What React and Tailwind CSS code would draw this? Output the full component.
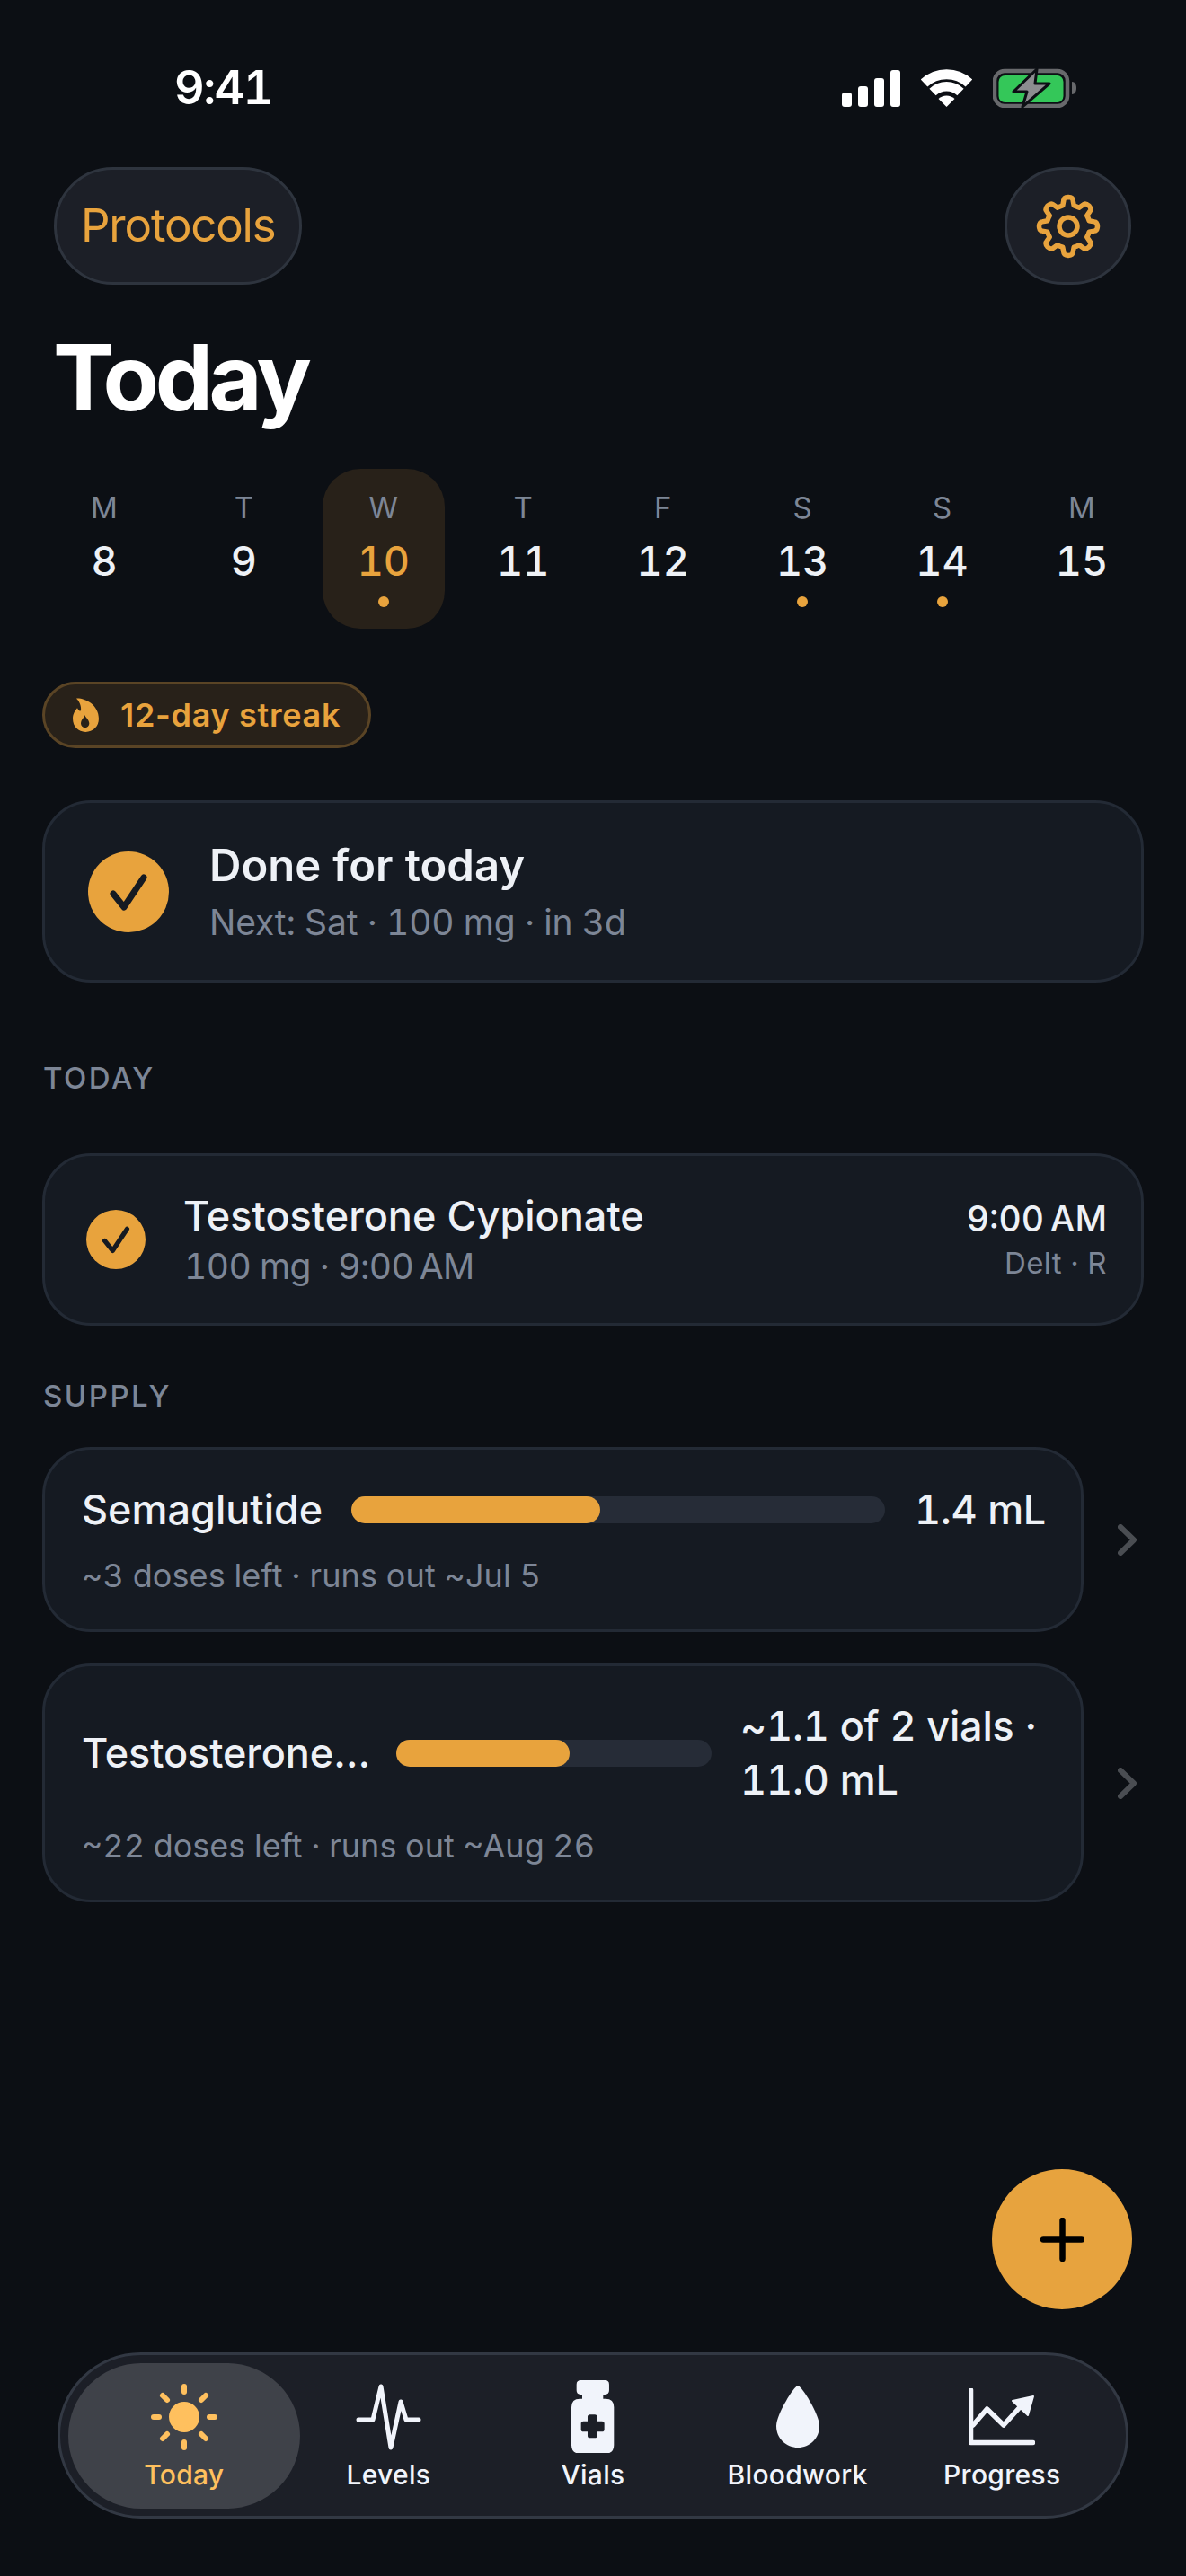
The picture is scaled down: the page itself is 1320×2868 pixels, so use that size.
import React from "react";

function Signal() {
  return (
    <div className="flex items-end gap-[7px] h-[41px]">
      <div className="w-[11px] h-[16px] rounded-[3px] bg-white" />
      <div className="w-[11px] h-[23px] rounded-[3px] bg-white" />
      <div className="w-[11px] h-[32px] rounded-[3px] bg-white" />
      <div className="w-[11px] h-[41px] rounded-[3px] bg-white" />
    </div>
  );
}

function Wifi() {
  return (
    <svg width="57" height="42" viewBox="0 0 57 42" fill="none">
      <path d="M3.6 15.5 A36.5 36.5 0 0 1 53.4 15.5" stroke="#fff" strokeWidth="11" />
      <path d="M13 25.5 A22.5 22.5 0 0 1 44 25.5" stroke="#fff" strokeWidth="10.5" />
      <path d="M28.5 42 L19.5 33 A13 13 0 0 1 37.5 33 Z" fill="#fff" />
    </svg>
  );
}

function Battery() {
  return (
    <svg width="93" height="44" viewBox="0 0 93 44" fill="none">
      <rect x="2" y="3" width="81" height="39" rx="11" stroke="#68696c" strokeWidth="4.5" />
      <rect x="6.5" y="8" width="72" height="30" rx="7" fill="#34c759" />
      <path d="M88 15 C91.5 15 93 18 93 22 C93 26 91.5 29 88 29 Z" fill="#68696c" />
      <path d="M49 1 L23 26 L38 26 L33 43 L63 17 L47 17 Z" fill="#8c8d90" stroke="#0c0f14" strokeWidth="3" strokeLinejoin="round" />
    </svg>
  );
}

function gearPath() {
  const rIn = 24;
  const rOut = 31.5;
  const pt = (r, deg) => {
    const a = (deg * Math.PI) / 180;
    return `${(r * Math.sin(a)).toFixed(2)} ${(-r * Math.cos(a)).toFixed(2)}`;
  };
  let d = "";
  for (let i = 0; i < 8; i++) {
    const c = i * 45;
    d += `${i === 0 ? "M" : `A${rIn} ${rIn} 0 0 1 `}${pt(rIn, c - 15)} `;
    d += `L${pt(rOut - 2, c - 10)} Q${pt(rOut + 1, c - 9)} ${pt(rOut + 1, c)} Q${pt(rOut + 1, c + 9)} ${pt(rOut - 2, c + 10)} `;
    d += `L${pt(rIn, c + 15)} `;
  }
  d += `A${rIn} ${rIn} 0 0 1 ${pt(rIn, -15)} Z`;
  return d;
}

function Gear() {
  return (
    <svg width="72" height="72" viewBox="-36 -36 72 72" fill="none">
      <path d={gearPath()} stroke="#e8a33d" strokeWidth="5.5" strokeLinejoin="round" />
      <circle r="10" stroke="#e8a33d" strokeWidth="5.5" />
    </svg>
  );
}

function Check({ size }) {
  return (
    <div className="flex items-center justify-center rounded-full bg-[#e8a33d] shrink-0" style={{ width: size, height: size }}>
      <svg width={size} height={size} viewBox="0 0 90 90" fill="none">
        <path d="M28 47 L40 62 L62 29" stroke="#151a22" strokeWidth="7" strokeLinecap="round" strokeLinejoin="round" />
      </svg>
    </div>
  );
}

function Flame() {
  return (
    <svg width="30" height="38.6" viewBox="33 38 90 116">
      <path
        fillRule="evenodd"
        fill="#e8a33d"
        d="M45 40 C72 38 120 60 120 108 C120 134 100 152 76 152 C52 152 33 134 33 108 C33 92 40 82 48 72 C52 80 56 84 60 80 C62 66 56 50 45 40 Z M72 95 C72 104 60 110 60 124 C60 132 66 138 74 138 C82 138 88 132 88 124 C88 112 78 106 72 95 Z"
      />
    </svg>
  );
}

function Day({ letter, num, active, dot }) {
  return (
    <div className={active ? "flex flex-col items-center w-[136px] h-[178px] pt-[23px] rounded-[42px] bg-[#282119]" : "flex flex-col items-center w-[136px] h-[178px] pt-[23px]"}>
      <div className="text-[33px] leading-[40px] text-[#7d8696]">{letter}</div>
      <div className={active ? "mt-[12px] text-[45px] leading-[56px] font-medium text-[#e8a33d]" : "mt-[12px] text-[45px] leading-[56px] font-medium text-[#eef1f6]"}>{num}</div>
      {dot && <div className="mt-[11px] w-[12px] h-[12px] rounded-full bg-[#e8a33d]" />}
    </div>
  );
}

function Chevron() {
  return (
    <svg width="21" height="35" viewBox="0 0 21 35" fill="none" className="shrink-0">
      <path d="M3 3 L18 17.5 L3 32" stroke="#4a4d52" strokeWidth="6" strokeLinecap="round" strokeLinejoin="round" />
    </svg>
  );
}

function Sun() {
  const rays = [
    [0, -28, 0, -34],
    [0, 28, 0, 34],
    [-28, 0, -34, 0],
    [28, 0, 34, 0],
    [-19, -19, -24, -24],
    [19, -19, 24, -24],
    [-19, 19, -24, 24],
    [19, 19, 24, 24],
  ];
  return (
    <svg width="74" height="74" viewBox="-37 -37 74 74" fill="none">
      <circle r="17" fill="#ffc05e" />
      {rays.map((r, i) => (
        <line key={i} x1={r[0]} y1={r[1]} x2={r[2]} y2={r[3]} stroke="#ffc05e" strokeWidth="6" strokeLinecap="round" />
      ))}
    </svg>
  );
}

function Pulse() {
  return (
    <svg width="73" height="74" viewBox="-3 -3 73 74" fill="none">
      <path d="M0 37 L16 37 L25 0 L36 68 L47 17 L53 37 L67 37" stroke="#f1f4fb" strokeWidth="5" strokeLinecap="round" strokeLinejoin="round" />
    </svg>
  );
}

function Vial() {
  return (
    <svg width="47.3" height="81.7" viewBox="226 60 142 245">
      <path
        fill="#f1f4fb"
        fillRule="evenodd"
        d="M258 60 H338 Q352 60 352 74 V94 Q352 108 338 108 H332 V122 H340 Q368 122 368 150 V277 Q368 305 340 305 H254 Q226 305 226 277 V150 Q226 122 254 122 H262 V108 H257 Q243 108 243 94 V74 Q243 60 258 60 Z M288 175 Q280 175 280 183 V197 H266 Q258 197 258 205 V224 Q258 232 266 232 H280 V245 Q280 253 288 253 H304 Q312 253 312 245 V232 H328 Q336 232 336 224 V205 Q336 197 328 197 H312 V183 Q312 175 304 175 Z"
      />
    </svg>
  );
}

function Drop() {
  return (
    <svg width="48" height="69" viewBox="0 0 48 69">
      <path fill="#f1f4fb" d="M24 0 C28 0 48 32 48 45 C48 59 37 69 24 69 C11 69 0 59 0 45 C0 32 20 0 24 0 Z" />
    </svg>
  );
}

function Chart() {
  return (
    <svg width="74" height="64" viewBox="0 0 74 64" fill="none">
      <path d="M2.5 2 V60.5 H71.5" stroke="#f1f4fb" strokeWidth="5.5" strokeLinecap="round" strokeLinejoin="round" />
      <path d="M5 41 L20.5 23 L39 41 L58 20" stroke="#f1f4fb" strokeWidth="5.5" strokeLinecap="round" strokeLinejoin="round" />
      <path d="M49 14 L72 9 L66 30 Z" fill="#f1f4fb" stroke="#f1f4fb" strokeWidth="2" strokeLinejoin="round" />
    </svg>
  );
}

function Tab({ label, active, children }) {
  return (
    <div className="relative flex flex-col items-center h-[162px] pt-[19px]">
      {active && <div className="absolute inset-y-0 -inset-x-[15px] rounded-full bg-[#3f4249]" />}
      <div className="relative flex items-center justify-center h-[82px]">{children}</div>
      <div className={active ? "relative mt-[3px] text-[30px] leading-[40px] font-medium tracking-[0.3px] text-[#ffc05e]" : "relative mt-[3px] text-[30px] leading-[40px] font-medium tracking-[0.3px] text-[#f1f4fb]"}>{label}</div>
    </div>
  );
}

const days = [
  ["M", 8], ["T", 9], ["W", 10, true, true], ["T", 11], ["F", 12], ["S", 13, false, true], ["S", 14, false, true], ["M", 15],
];

export default function App() {
  return (
    <div className="relative flex flex-col w-[1320px] h-[2868px] overflow-hidden bg-[#0c0f14] [font-family:Inter,sans-serif] tabular-nums text-[#eef1f6]">
      <div className="mt-[76px] flex items-center justify-between pl-[194px] pr-[122px] h-[44px]">
        <div className="text-[52px] leading-[44px] font-semibold tracking-[-1.5px] text-white">9:41</div>
        <div className="flex items-center">
          <Signal />
          <div className="ml-[23px]"><Wifi /></div>
          <div className="ml-[23px]"><Battery /></div>
        </div>
      </div>

      <div className="mt-[66px] flex items-center justify-between pl-[60px] pr-[61px]">
        <div className="flex items-center h-[131px] px-[27px] rounded-full border-[3px] border-[#2e343e] bg-[#1c1f27] text-[51px] tracking-[-1.2px] text-[#e8a33d]">Protocols</div>
        <div className="flex items-center justify-center w-[141px] h-[131px] rounded-full border-[3px] border-[#2e343e] bg-[#1c1f27]">
          <Gear />
        </div>
      </div>

      <h1 className="mt-[52px] ml-[59px] text-[102px] leading-[102px] font-bold tracking-[-4.5px] text-white">Today</h1>

      <div className="mt-[51px] px-[48px] flex justify-between">
        {days.map((d, i) => (
          <Day key={i} letter={d[0]} num={d[1]} active={d[2]} dot={d[3]} />
        ))}
      </div>

      <div className="mt-[59px] ml-[47px] self-start flex items-center h-[74px] pl-[31px] pr-[31px] rounded-full border-[3px] border-[#5a4425] bg-[#282119]">
        <Flame />
        <span className="ml-[23px] text-[36px] font-semibold tracking-[0.7px] normal-nums text-[#e8a33d]">12-day streak</span>
      </div>

      <div className="mt-[58px] mx-[47px] flex items-center h-[203px] pl-[48px] rounded-[54px] border-[3px] border-[#232a35] bg-[#151a22]">
        <Check size={90} />
        <div className="ml-[45px] pt-[2px]">
          <div className="text-[49px] leading-[56px] font-semibold text-[#eef1f6]">Done for today</div>
          <div className="mt-[11px] text-[39px] leading-[48px] tracking-[-0.15px] text-[#7d8696]">Next: Sat · 100 mg · in 3d</div>
        </div>
      </div>

      <div className="mt-[86px] ml-[48px] text-[33px] leading-[40px] font-medium tracking-[2.5px] text-[#7d8696]">TODAY</div>

      <div className="mt-[64px] mx-[47px] flex items-center justify-between h-[192px] pl-[46px] pr-[38px] rounded-[54px] border-[3px] border-[#232a35] bg-[#151a22]">
        <div className="flex items-center">
          <Check size={66} />
          <div className="ml-[42px] pt-[2px]">
            <div className="text-[45px] leading-[50px] font-medium text-[#eef1f6]">Testosterone Cypionate</div>
            <div className="mt-[7px] ml-[1px] text-[39px] leading-[48px] tracking-[-0.6px] text-[#7d8696]">{"100 mg · 9:00\u202fAM"}</div>
          </div>
        </div>
        <div className="flex flex-col items-end">
          <div className="text-[39px] leading-[44px] font-medium text-[#eef1f6]">{"9:00\u202fAM"}</div>
          <div className="mt-[7px] text-[33px] leading-[40px] tracking-[0.4px] text-[#7d8696]">Delt · R</div>
        </div>
      </div>

      <div className="mt-[58px] ml-[48px] text-[33px] leading-[40px] font-medium tracking-[2.5px] text-[#7d8696]">SUPPLY</div>

      <div className="mt-[37px] mx-[47px] flex items-center justify-between pr-[8px]">
        <div className="w-[1159px] pt-[37px] pb-[36px] pl-[41px] pr-[39px] rounded-[54px] border-[3px] border-[#232a35] bg-[#151a22]">
          <div className="flex items-center h-[60px]">
            <div className="text-[45px] font-medium text-[#eef1f6]">Semaglutide</div>
            <div className="flex-1 ml-[32px] h-[30px] rounded-full bg-[#262c37]">
              <div className="h-full rounded-full bg-[#e8a33d]" style={{ width: "46.7%" }} />
            </div>
            <div className="ml-[33px] text-[45px] font-medium tracking-[-0.3px] text-[#eef1f6]">1.4 mL</div>
          </div>
          <div className="mt-[19px] text-[36px] leading-[48px] tracking-[0.1px] text-[#7d8696]">~3 doses left · runs out ~Jul 5</div>
        </div>
        <Chevron />
      </div>

      <div className="mt-[35px] mx-[47px] flex items-center justify-between pr-[8px]">
        <div className="w-[1159px] pt-[37px] pb-[36px] pl-[41px] pr-[40px] rounded-[54px] border-[3px] border-[#232a35] bg-[#151a22]">
          <div className="flex items-center h-[120px]">
            <div className="w-[316px] shrink-0 whitespace-nowrap text-[45px] font-medium tracking-[-0.1px] text-[#eef1f6]">Testosterone…</div>
            <div className="flex-1 ml-[34px] h-[30px] rounded-full bg-[#262c37]">
              <div className="h-full rounded-full bg-[#e8a33d]" style={{ width: "55%" }} />
            </div>
            <div className="w-[339px] ml-[32px] shrink-0 text-[45px] leading-[60px] font-medium tracking-[-0.2px] text-[#eef1f6]">~1.1 of 2 vials · 11.0 mL</div>
          </div>
          <div className="mt-[19px] text-[36px] leading-[48px] text-[#7d8696]">~22 doses left · runs out ~Aug 26</div>
        </div>
        <Chevron />
      </div>

      <div className="absolute right-[60px] bottom-[297px] flex items-center justify-center w-[156px] h-[156px] rounded-full bg-[#e7a33e]">
        <svg width="49" height="49" viewBox="0 0 49 49" fill="none">
          <path d="M24.5 3 V46 M3 24.5 H46" stroke="#000" strokeWidth="6.5" strokeLinecap="round" />
        </svg>
      </div>

      <div className="mt-auto mb-[64px] mx-[64px] h-[185px] flex items-center px-[24px] rounded-full border-[3px] border-[#323843] bg-[#1c1f27]">
        <div className="grid grid-cols-5 w-full">
          <Tab label="Today" active><Sun /></Tab>
          <Tab label="Levels"><Pulse /></Tab>
          <Tab label="Vials"><Vial /></Tab>
          <Tab label="Bloodwork"><Drop /></Tab>
          <Tab label="Progress"><Chart /></Tab>
        </div>
      </div>
    </div>
  );
}
